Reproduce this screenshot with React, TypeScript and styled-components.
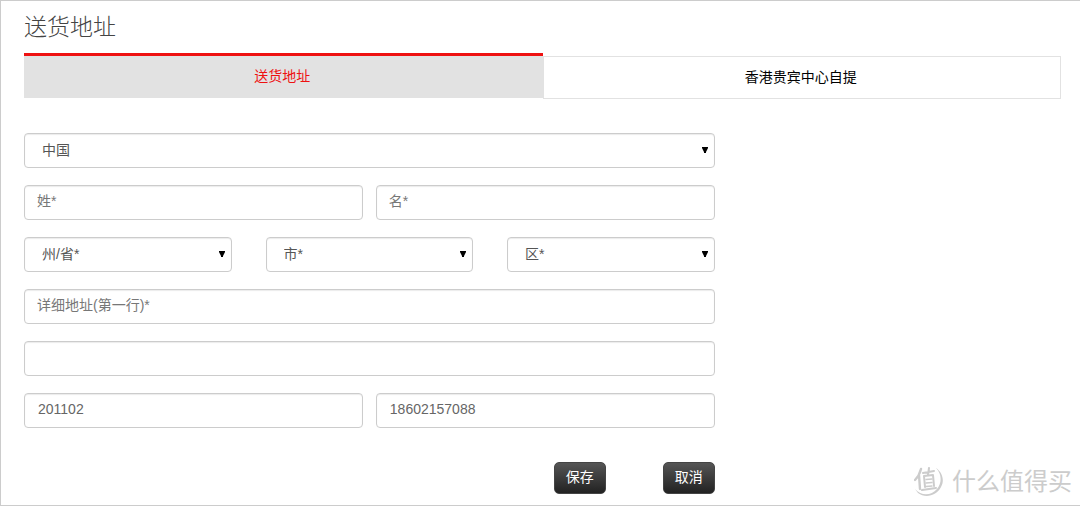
import React from "react";
import styled, { createGlobalStyle } from "styled-components";

const sans = `"Liberation Sans", "Noto Sans CJK SC", sans-serif`;

const GlobalStyle = createGlobalStyle`
  *, *::before, *::after { box-sizing: border-box; }
  body { margin: 0; background: #fff; font-family: ${sans}; }
`;

const Panel = styled.main`
  position: relative;
  padding: 12px 19px 11px 23px;
  border: solid #ccc;
  border-width: 1px 0 1px 1px;
`;

const Title = styled.h1`
  margin: 0 0 12px;
  font-size: 23px;
  line-height: 28px;
  font-weight: 300;
  color: #444;
`;

const Tabs = styled.div`
  display: grid;
  grid-template-columns: 1fr 1fr;
`;

const Tab = styled.button<{ $active?: boolean }>`
  height: ${(p) => (p.$active ? 45 : 43)}px;
  margin: ${(p) => (p.$active ? "0" : "3px 0 0")};
  padding: 0 2px 2px 0;
  border: ${(p) => (p.$active ? "0 solid #e2e2e2" : "1px solid #e2e2e2")};
  ${(p) => p.$active && "border-top: 3px solid #ee1111;"}
  background: ${(p) => (p.$active ? "#e2e2e2" : "#fff")};
  color: ${(p) => (p.$active ? "#ee1111" : "#000")};
  font: 14px/20px ${sans};
`;

const Form = styled.form`
  width: 66.6%;
  margin-top: 34px;
  display: grid;
  gap: 17px;
`;

const Row = styled.div<{ $columns?: number; $gap?: number }>`
  display: grid;
  grid-template-columns: repeat(${(p) => p.$columns ?? 1}, 1fr);
  column-gap: ${(p) => p.$gap ?? 0}px;
`;

const TextField = styled.input`
  width: 100%;
  min-width: 0;
  height: 35px;
  padding: 0 12px 3px;
  border: 1px solid #ccc;
  border-radius: 4px;
  box-shadow: inset 0 1px 1px rgba(0, 0, 0, 0.08);
  background: #fff;
  color: #666;
  font: 14px/20px ${sans};
  &:not(:placeholder-shown) { padding-left: 13px; }
  &::placeholder { color: #777; opacity: 1; }
`;

const SelectBox = styled.div`
  position: relative;
`;

const Select = styled.select`
  display: block;
  width: 100%;
  height: 35px;
  padding: 0 24px 2px 17px;
  border: 1px solid #ccc;
  border-radius: 4px;
  box-shadow: inset 0 1px 1px rgba(0, 0, 0, 0.08);
  appearance: none;
  background: #fff;
  color: #555;
  font: 14px/20px ${sans};
`;

const Arrow = styled.svg`
  position: absolute;
  top: 14px;
  right: 7px;
  width: 6px;
  height: 6px;
  pointer-events: none;
`;

const Actions = styled.div`
  display: flex;
  justify-content: flex-end;
  gap: 57px;
  margin-top: 17px;
`;

const ActionButton = styled.button`
  width: 52px;
  height: 32px;
  padding: 0 0 2px;
  border: 1px solid #444;
  border-radius: 5px;
  background: linear-gradient(#555, #222);
  color: #fff;
  font: 14px/20px ${sans};
`;

const Watermark = styled.div`
  position: absolute;
  right: 8px;
  bottom: 7px;
  display: flex;
  align-items: center;
  gap: 8px;
  color: #ccc;
  font-size: 24px;
  line-height: 32px;
`;

function Dropdown({ label, value }: { label: string; value: string }) {
  return (
    <SelectBox>
      <Select aria-label={label} defaultValue={value}>
        <option value={value}>{value}</option>
      </Select>
      <Arrow viewBox="0 0 6 6" aria-hidden="true">
        <path d="M0 0H6V1L4 5V6H2V5L0 1Z" fill="#000" />
      </Arrow>
    </SelectBox>
  );
}

function WatermarkLogo() {
  return (
    <svg width="30" height="30" viewBox="0 0 30 30" fill="none" stroke="currentColor" aria-hidden="true">
      <path
        d="M22 1C28 5 31 13 27 20C23 28 12 32 4 26L1 22C7 29 17 29 23 22C28 16 28 7 22 1Z"
        fill="currentColor"
        stroke="none"
      />
      <g strokeLinecap="round" strokeLinejoin="round">
        <path d="M7 2C6 6 4 10 1 13M5 8L6 22" strokeWidth="2.4" />
        <path d="M9 6L20 4M15 1L14 8M10 9L19 8L20 19M10 9L11 20M8 23L22 21" strokeWidth="2" />
        <path d="M12 12.500L18 12M12 16L18 15.500M12 19.500L18 19" strokeWidth="1.400" />
      </g>
    </svg>
  );
}

export default function App() {
  return (
    <>
      <GlobalStyle />
      <Panel>
        <Title>送货地址</Title>
        <Tabs role="tablist">
          <Tab $active role="tab" aria-selected="true">送货地址</Tab>
          <Tab role="tab" aria-selected="false">香港贵宾中心自提</Tab>
        </Tabs>
        <Form onSubmit={(e) => e.preventDefault()}>
          <Row><Dropdown label="国家" value="中国" /></Row>
          <Row $columns={2} $gap={13}>
            <TextField aria-label="姓" placeholder="姓*" />
            <TextField aria-label="名" placeholder="名*" />
          </Row>
          <Row $columns={3} $gap={34}>
            <Dropdown label="州/省" value="州/省*" />
            <Dropdown label="市" value="市*" />
            <Dropdown label="区" value="区*" />
          </Row>
          <Row><TextField aria-label="详细地址(第一行)" placeholder="详细地址(第一行)*" /></Row>
          <Row><TextField aria-label="详细地址(第二行)" /></Row>
          <Row $columns={2} $gap={13}>
            <TextField aria-label="邮编" defaultValue="201102" />
            <TextField aria-label="电话" defaultValue="18602157088" />
          </Row>
          <Actions>
            <ActionButton type="submit">保存</ActionButton>
            <ActionButton type="button">取消</ActionButton>
          </Actions>
        </Form>
        <Watermark>
          <WatermarkLogo />
          <span>什么值得买</span>
        </Watermark>
      </Panel>
    </>
  );
}
